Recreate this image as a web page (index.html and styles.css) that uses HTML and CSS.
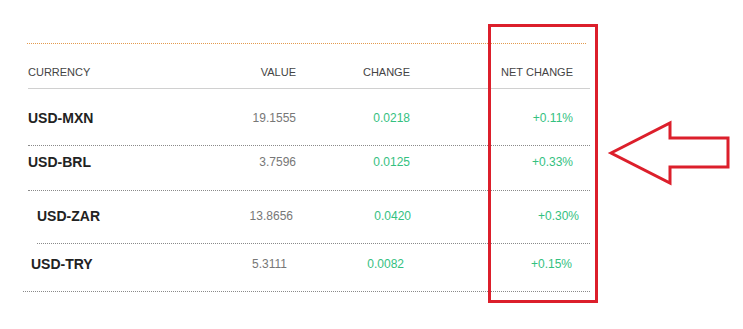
FILE: index.html
```html
<!DOCTYPE html>
<html>
<head>
<meta charset="utf-8">
<link rel="stylesheet" href="styles.css">
</head>
<body>
<div class="page">
  <div class="quotes">
    <div class="rule-top"></div>
    <div class="row head">
      <div class="cell name">CURRENCY</div>
      <div class="cell num">VALUE</div>
      <div class="cell num">CHANGE</div>
      <div class="cell num">NET CHANGE</div>
    </div>
    <div class="row r1">
      <div class="cell name">USD-MXN</div>
      <div class="cell num val">19.1555</div>
      <div class="cell num up">0.0218</div>
      <div class="cell num up">+0.11%</div>
    </div>
    <div class="row r2">
      <div class="cell name">USD-BRL</div>
      <div class="cell num val">3.7596</div>
      <div class="cell num up">0.0125</div>
      <div class="cell num up">+0.33%</div>
    </div>
    <div class="row r3">
      <div class="cell name">USD-ZAR</div>
      <div class="cell num val">13.8656</div>
      <div class="cell num up">0.0420</div>
      <div class="cell num up">+0.30%</div>
    </div>
    <div class="row r4">
      <div class="cell name">USD-TRY</div>
      <div class="cell num val">5.3111</div>
      <div class="cell num up">0.0082</div>
      <div class="cell num up">+0.15%</div>
    </div>
  </div>
  <div class="highlight"></div>
  <svg class="arrow" width="140" height="80" viewBox="600 115 140 80">
    <polygon points="611,153 670,123 670,138 728,138 728,167 670,167 670,183" fill="#fff" stroke="#dc1f2b" stroke-width="3" stroke-linejoin="miter"/>
  </svg>
</div>
</body>
</html>
```
FILE: styles.css
```css
html, body {
  margin: 0;
  padding: 0;
  background: #fff;
}
.page {
  position: relative;
  width: 743px;
  height: 329px;
  font-family: "Liberation Sans", Arial, sans-serif;
}
.quotes {
  display: flex;
  flex-direction: column;
  padding-top: 43px;
}
.rule-top {
  margin-left: 27px;
  width: 559px;
  border-top: 1px dotted #e39a4e;
}
.row {
  display: grid;
  grid-template-columns: 172px 96px 114px 163px 1fr;
  box-sizing: border-box;
  align-items: start;
  margin-left: 28px;
  width: 562px;
  border-bottom: 1px dotted #8a8a8a;
  line-height: 16px;
}
.cell.num {
  text-align: right;
}
.head {
  height: 45px;
  padding-top: 20px;
  border-bottom: 1px solid #d0d0d0;
  font-size: 11px;
  color: #444;
}
.name {
  font-size: 14px;
  font-weight: bold;
  color: #222;
}
.head .name {
  font-size: 11px;
  font-weight: normal;
  color: #444;
}
.val {
  font-size: 12px;
  color: #777;
}
.up {
  font-size: 12px;
  color: #34c17f;
}
.r1 {
  height: 57px;
  padding-top: 21px;
}
.r2 {
  height: 45px;
  padding-top: 8px;
}
.r3 {
  height: 53px;
  padding-top: 17px;
  margin-left: 37px;
  width: 553px;
  grid-template-columns: 160px 96px 118px 168px 1fr;
}
.r4 {
  height: 48px;
  padding-top: 12px;
  margin-left: 23px;
  width: 567px;
  grid-template-columns: 168px 96px 117px 168px 1fr;
}
.r4 .name {
  padding-left: 8px;
}
.highlight {
  position: absolute;
  left: 488px;
  top: 24px;
  width: 104px;
  height: 273px;
  border: 3px solid #dc1f2b;
}
.arrow {
  position: absolute;
  left: 600px;
  top: 115px;
}
```
